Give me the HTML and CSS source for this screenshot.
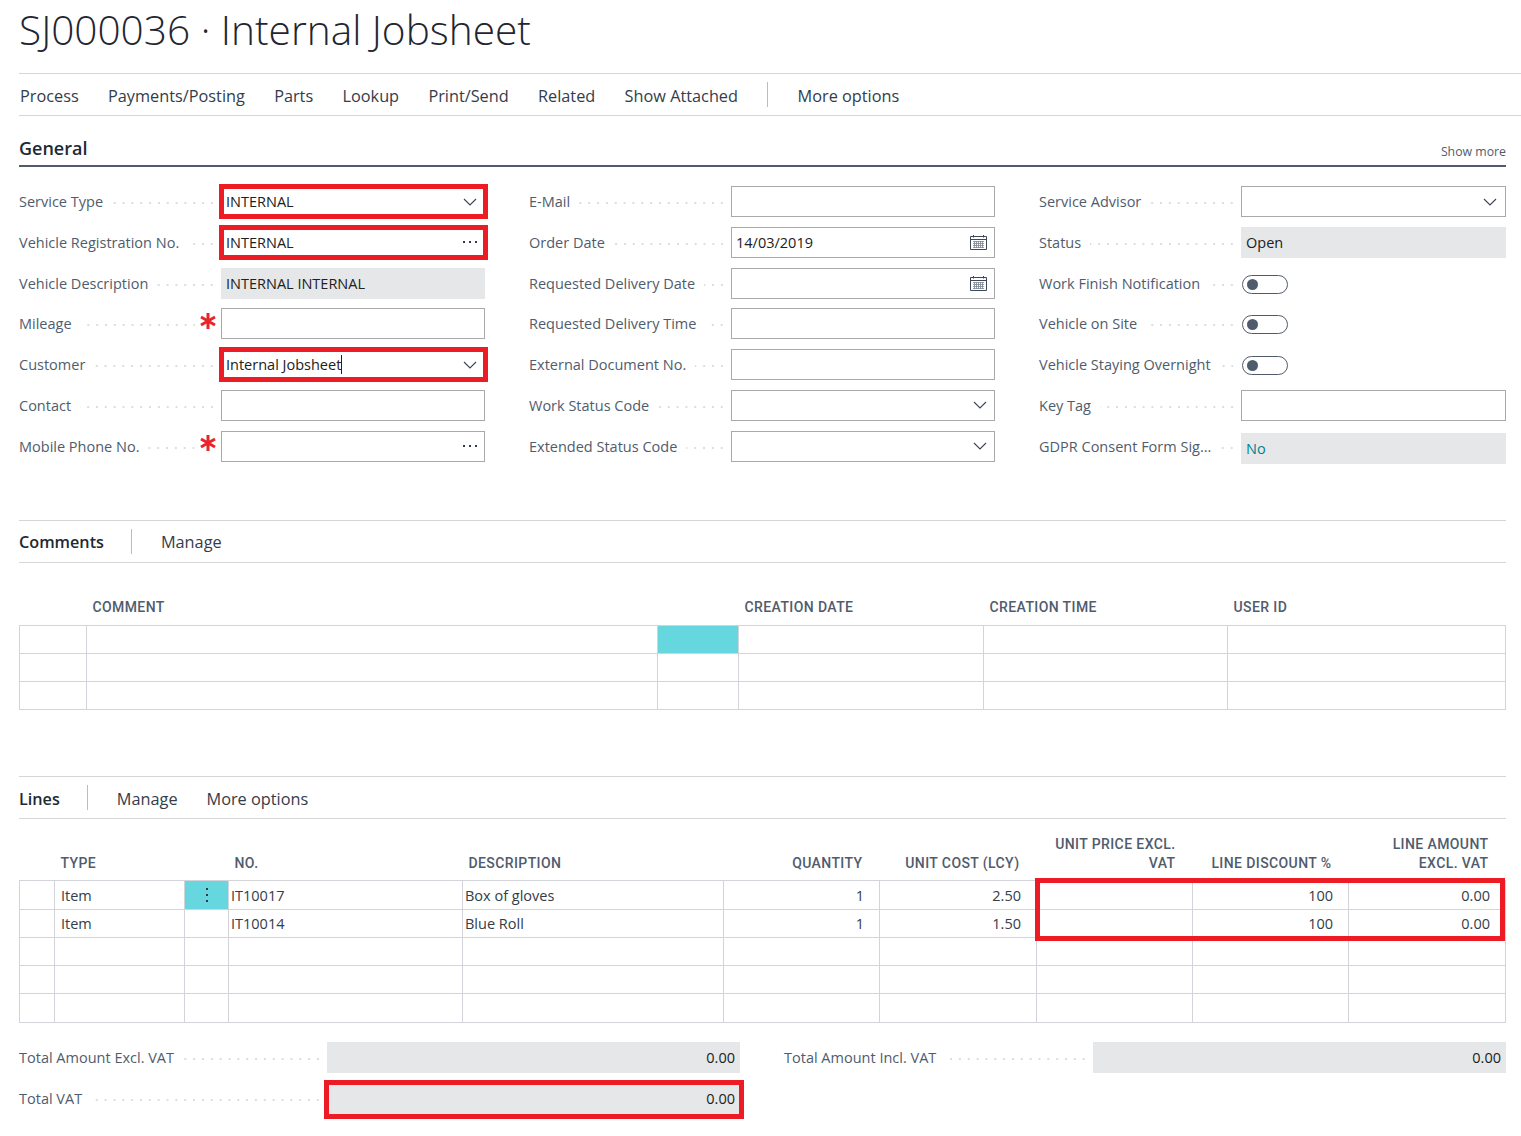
FILE: index.html
```html
<!DOCTYPE html>
<html lang="en">
  <head>
    <meta charset="UTF-8" />
    <title>SJ000036 · Internal Jobsheet</title>
    <link rel="stylesheet" href="styles.css">
  </head>
  <body>
    <svg class="icon-defs" width="0" height="0">
      <symbol id="chevron" viewBox="0 0 14 8"><path d="M1 1l6 6 6-6" fill="none" stroke="#3a4454" stroke-width="1.1"/></symbol>
      <symbol id="dots" viewBox="0 0 14 3"><path d="M0 0h2v2H0zM6 0h2v2H6zM12 0h2v2h-2z" fill="#333c4a"/></symbol>
      <symbol id="calendar" viewBox="0 0 17 16">
        <path d="M.5 2.500h16v13H.5z" fill="#fff" stroke="#3f4856"/>
        <path d="M1 5.500h15" stroke="#3f4856"/>
        <path d="M3.500 1v2.500M13.500 1v2.500" stroke="#3f4856"/>
        <path d="M3 7.500h11M3 9.500h11M3 11.500h11M3 13.500h11M4.500 7v7M6.500 7v7M8.500 7v7M10.500 7v7M12.500 7v7" stroke="#7c8592" stroke-width=".8"/>
      </symbol>
      <symbol id="star" viewBox="0 0 16 16"><path d="M8 0v16M1 4l14 8M15 4L1 12" stroke="#e8262a" stroke-width="3"/></symbol>
    </svg>

    <header class="page-title">
      <h1>SJ000036 · Internal Jobsheet</h1>
    </header>

    <nav class="action-bar">
      <span>Process</span>
      <span>Payments/Posting</span>
      <span>Parts</span>
      <span>Lookup</span>
      <span>Print/Send</span>
      <span>Related</span>
      <span>Show Attached</span>
      <i class="bar-divider"></i>
      <span>More options</span>
    </nav>

    <main class="content">
      <!-- General -->
      <div class="section-head">
        <h2>General</h2>
        <span class="show-more">Show more</span>
      </div>

      <div class="field-grid">
        <div class="field-col">
          <div class="field">
            <label>Service Type</label><i class="leader"></i>
            <div class="input flagged">INTERNAL<svg class="chevron"><use href="#chevron"/></svg></div>
          </div>
          <div class="field">
            <label>Vehicle Registration No.</label><i class="leader"></i>
            <div class="input flagged">INTERNAL<svg class="dots"><use href="#dots"/></svg></div>
          </div>
          <div class="field">
            <label>Vehicle Description</label><i class="leader"></i>
            <div class="input readonly">INTERNAL INTERNAL</div>
          </div>
          <div class="field">
            <label>Mileage</label><i class="leader"></i>
            <svg class="required"><use href="#star"/></svg>
            <div class="input"></div>
          </div>
          <div class="field">
            <label>Customer</label><i class="leader"></i>
            <div class="input flagged"><span class="caret">Internal Jobsheet</span><svg class="chevron"><use href="#chevron"/></svg></div>
          </div>
          <div class="field">
            <label>Contact</label><i class="leader"></i>
            <div class="input"></div>
          </div>
          <div class="field">
            <label>Mobile Phone No.</label><i class="leader"></i>
            <svg class="required"><use href="#star"/></svg>
            <div class="input"><svg class="dots"><use href="#dots"/></svg></div>
          </div>
        </div>

        <div class="field-col">
          <div class="field">
            <label>E-Mail</label><i class="leader"></i>
            <div class="input"></div>
          </div>
          <div class="field">
            <label>Order Date</label><i class="leader"></i>
            <div class="input">14/03/2019<svg class="calendar"><use href="#calendar"/></svg></div>
          </div>
          <div class="field">
            <label>Requested Delivery Date</label><i class="leader"></i>
            <div class="input"><svg class="calendar"><use href="#calendar"/></svg></div>
          </div>
          <div class="field">
            <label>Requested Delivery Time</label><i class="leader"></i>
            <div class="input"></div>
          </div>
          <div class="field">
            <label>External Document No.</label><i class="leader"></i>
            <div class="input"></div>
          </div>
          <div class="field">
            <label>Work Status Code</label><i class="leader"></i>
            <div class="input"><svg class="chevron"><use href="#chevron"/></svg></div>
          </div>
          <div class="field">
            <label>Extended Status Code</label><i class="leader"></i>
            <div class="input"><svg class="chevron"><use href="#chevron"/></svg></div>
          </div>
        </div>

        <div class="field-col">
          <div class="field">
            <label>Service Advisor</label><i class="leader"></i>
            <div class="input"><svg class="chevron"><use href="#chevron"/></svg></div>
          </div>
          <div class="field">
            <label>Status</label><i class="leader"></i>
            <div class="input readonly">Open</div>
          </div>
          <div class="field">
            <label>Work Finish Notification</label><i class="leader"></i>
            <div class="toggle-slot"><div class="toggle"></div></div>
          </div>
          <div class="field">
            <label>Vehicle on Site</label><i class="leader"></i>
            <div class="toggle-slot"><div class="toggle"></div></div>
          </div>
          <div class="field">
            <label>Vehicle Staying Overnight</label><i class="leader"></i>
            <div class="toggle-slot"><div class="toggle"></div></div>
          </div>
          <div class="field">
            <label>Key Tag</label><i class="leader"></i>
            <div class="input"></div>
          </div>
          <div class="field">
            <label>GDPR Consent Form Sig...</label><i class="leader"></i>
            <div class="input readonly link-value">No</div>
          </div>
        </div>
      </div>

      <!-- Comments -->
      <div class="part-bar comments-bar">
        <strong>Comments</strong>
        <i class="bar-divider"></i>
        <span>Manage</span>
      </div>

      <table class="grid comments-grid">
        <colgroup>
          <col class="c-67"><col class="c-571"><col class="c-81"><col class="c-245"><col class="c-244"><col class="c-278">
        </colgroup>
        <thead>
          <tr>
            <th></th><th>COMMENT</th><th></th><th>CREATION DATE</th><th>CREATION TIME</th><th>USER ID</th>
          </tr>
        </thead>
        <tbody>
          <tr><td></td><td></td><td class="active"></td><td></td><td></td><td></td></tr>
          <tr><td></td><td></td><td></td><td></td><td></td><td></td></tr>
          <tr><td></td><td></td><td></td><td></td><td></td><td></td></tr>
        </tbody>
      </table>

      <!-- Lines -->
      <div class="part-bar lines-bar">
        <strong>Lines</strong>
        <i class="bar-divider"></i>
        <span>Manage</span>
        <span>More options</span>
      </div>

      <div class="lines-wrap">
        <table class="grid lines-grid">
          <colgroup>
            <col class="c-35"><col class="c-130"><col class="c-44"><col class="c-234"><col class="c-261"><col class="c-156"><col class="c-157"><col class="c-156"><col class="c-156"><col class="c-157">
          </colgroup>
          <thead>
            <tr>
              <th></th><th>TYPE</th><th></th><th>NO.</th><th>DESCRIPTION</th>
              <th class="num">QUANTITY</th>
              <th class="num">UNIT COST (LCY)</th>
              <th class="num">UNIT PRICE EXCL. VAT</th>
              <th class="num">LINE DISCOUNT %</th>
              <th class="num">LINE AMOUNT EXCL. VAT</th>
            </tr>
          </thead>
          <tbody>
            <tr>
              <td></td><td class="type">Item</td>
              <td class="active row-menu"><svg width="2" height="14" viewBox="0 0 2 14"><path d="M0 0h2v2H0zM0 6h2v2H0zM0 12h2v2H0z" fill="#2f3a48"/></svg></td>
              <td>IT10017</td><td>Box of gloves</td><td class="num">1</td><td class="num">2.50</td><td></td><td class="num">100</td><td class="num">0.00</td>
            </tr>
            <tr>
              <td></td><td class="type">Item</td><td></td>
              <td>IT10014</td><td>Blue Roll</td><td class="num">1</td><td class="num">1.50</td><td></td><td class="num">100</td><td class="num">0.00</td>
            </tr>
            <tr><td></td><td></td><td></td><td></td><td></td><td></td><td></td><td></td><td></td><td></td></tr>
            <tr><td></td><td></td><td></td><td></td><td></td><td></td><td></td><td></td><td></td><td></td></tr>
            <tr><td></td><td></td><td></td><td></td><td></td><td></td><td></td><td></td><td></td><td></td></tr>
          </tbody>
        </table>
        <div class="lines-flag"></div>
      </div>

      <!-- Totals -->
      <div class="totals">
        <div class="total-row">
          <label>Total Amount Excl. VAT</label><i class="leader"></i>
          <div class="total-value">0.00</div>
        </div>
        <div class="total-row">
          <label>Total Amount Incl. VAT</label><i class="leader"></i>
          <div class="total-value">0.00</div>
        </div>
        <div class="total-row">
          <label>Total VAT</label><i class="leader"></i>
          <div class="total-value flagged">0.00</div>
        </div>
      </div>
    </main>
  </body>
</html>
```

FILE: styles.css
```css
* {
  box-sizing: border-box;
}

html,
body {
  margin: 0;
  background: #fff;
  font-family: 'Open Sans', 'Noto Sans', sans-serif;
  font-size: 14.5px;
  color: #212121;
}

.icon-defs {
  position: absolute;
}

/* Page header */
.page-title {
  height: 74px;
  margin-left: 19px;
  border-bottom: 1px solid #d5d6d9;
}

.page-title h1 {
  margin: 0;
  font-size: 40.6px;
  font-weight: 300;
  line-height: 60px;
  color: #1f2630;
}

.action-bar {
  display: flex;
  align-items: center;
  gap: 29.3px;
  height: 42px;
  margin-left: 19px;
  padding: 2px 0 0 1px;
  border-bottom: 1px solid #d5d6d9;
  font-size: 16.3px;
  color: #333c4a;
}

.bar-divider {
  width: 1px;
  height: 25px;
  margin-top: -2px;
  background: #b9bcc2;
}

.content {
  margin: 0 15px 0 19px;
}

/* General */
.section-head {
  display: flex;
  align-items: baseline;
  justify-content: space-between;
  height: 51px;
  padding-top: 19px;
  border-bottom: 2px solid #505c6d;
}

.section-head h2 {
  margin: 0;
  font-size: 18px;
  font-weight: 600;
  line-height: 26px;
  color: #212933;
}

.show-more {
  position: relative;
  top: 1px;
  font-size: 12.3px;
  color: #505c6d;
}

.field-grid {
  display: grid;
  grid-template-columns: 466px 466px 467px;
  column-gap: 44px;
  margin-top: 19px;
}

.field-col {
  display: grid;
  grid-auto-rows: 31px;
  row-gap: 9.8px;
}

.field {
  display: flex;
  align-items: center;
}

.field label,
.total-row label {
  color: #505c6d;
  white-space: nowrap;
}

/* dotted line between a label and its value */
.leader {
  flex: 1;
  align-self: center;
  height: 2px;
  margin: 3px 8px 0 9px;
  background-image: linear-gradient(90deg, transparent calc(100% - 2px), #dcdde0 calc(100% - 2px));
  background-size: 8.85px 2px;
  background-position: right center;
}

.required {
  width: 16px;
  height: 16px;
  margin: -6px 5px 0 -3px;
}

.input {
  position: relative;
  display: flex;
  align-items: center;
  flex: none;
  width: 264px;
  height: 100%;
  padding: 0 5px 0 4px;
  border: 1px solid #a9a9a9;
  background: #fff;
}

.field-col:last-child .input,
.field-col:last-child .toggle-slot {
  width: 265px;
}

.field-col:last-child .chevron {
  margin-right: 3px;
}

.input.readonly {
  border-color: #e6e7e9;
  background: #e6e7e9;
}

.link-value {
  margin-top: 4px;
  color: #00838f;
}

.input.flagged::after {
  content: "";
  position: absolute;
  top: -3px;
  right: -4px;
  bottom: -3px;
  left: -3px;
  border: 5px solid #ed1c24;
  pointer-events: none;
}

.caret {
  border-right: 1px solid #212121;
}

.chevron {
  width: 14px;
  height: 8px;
  margin-left: auto;
  margin-right: 2px;
}

.dots {
  width: 14px;
  height: 3px;
  margin-left: auto;
  margin-right: 2px;
}

.calendar {
  width: 17px;
  height: 16px;
  margin-left: auto;
  margin-right: 2px;
}

.toggle-slot {
  display: flex;
  align-items: center;
  flex: none;
  width: 264px;
  padding: 2px 0 0 1px;
}

.toggle {
  position: relative;
  width: 46px;
  height: 19px;
  border: 1px solid #505c6d;
  border-radius: 10px;
}

.toggle::before {
  content: "";
  position: absolute;
  top: 3px;
  left: 4px;
  width: 11px;
  height: 11px;
  border-radius: 50%;
  background: #505c6d;
}

/* Subpage bars */
.part-bar {
  display: flex;
  align-items: center;
  gap: 29px;
  height: 43px;
  padding-top: 2px;
  border-top: 1px solid #d5d6d9;
  border-bottom: 1px solid #d5d6d9;
  font-size: 16.3px;
  color: #333c4a;
}

.part-bar strong {
  font-size: 16.2px;
  font-weight: 600;
  color: #212933;
}

.part-bar .bar-divider {
  margin-left: -2px;
}

.comments-bar {
  margin-top: 58px;
}

.lines-bar {
  margin-top: 66px;
}

/* Tables */
.grid {
  width: 1487px;
  table-layout: fixed;
  border-collapse: collapse;
}

.c-35 { width: 35px; }
.c-44 { width: 44px; }
.c-67 { width: 67px; }
.c-81 { width: 81px; }
.c-130 { width: 130px; }
.c-156 { width: 156px; }
.c-157 { width: 157px; }
.c-234 { width: 234px; }
.c-244 { width: 244px; }
.c-245 { width: 245px; }
.c-261 { width: 261px; }
.c-278 { width: 278px; }
.c-571 { width: 571px; }

.grid th {
  padding: 0 6px 8px;
  border: 0;
  vertical-align: bottom;
  font-family: Roboto, 'Noto Sans', sans-serif;
  font-size: 14px;
  font-weight: 500;
  line-height: 19px;
  letter-spacing: 0.4px;
  text-align: left;
  color: #505c6d;
}

.comments-grid thead tr {
  height: 63px;
}

.lines-grid thead tr {
  height: 61px;
}

.lines-grid th {
  padding-bottom: 7px;
}

.grid th.num {
  padding-right: 17px;
  text-align: right;
}

.grid td {
  height: 28px;
  padding: 0 2px;
  border: 1px solid #d2d4d9;
  color: #333c4a;
  white-space: nowrap;
}

.lines-grid tbody tr:first-child td,
.lines-grid tbody tr:last-child td {
  height: 29px;
}

.lines-grid tbody tr:first-child td {
  padding-top: 1px;
}

.grid td.num {
  padding-right: 15px;
  text-align: right;
}

.grid td.type {
  padding-left: 6px;
}

.grid td.active {
  background: #66d7df;
}

.grid td.row-menu {
  text-align: center;
  line-height: 0;
}

.lines-wrap {
  position: relative;
}

.lines-flag {
  position: absolute;
  top: 59px;
  left: 1016px;
  width: 470px;
  height: 63px;
  border: 5px solid #ed1c24;
}

/* Totals */
.totals {
  display: grid;
  grid-template-columns: 721px 722px;
  column-gap: 44px;
  row-gap: 10px;
  margin-top: 19px;
  padding-bottom: 14px;
}

.total-row {
  display: flex;
  align-items: center;
  height: 31px;
}

.total-value {
  position: relative;
  flex: none;
  width: 413px;
  height: 100%;
  padding-right: 5px;
  background: #e6e7e9;
  line-height: 32px;
  text-align: right;
}

.total-value.flagged::after {
  content: "";
  position: absolute;
  top: -3px;
  right: -4px;
  bottom: -5px;
  left: -3px;
  border: 5px solid #ed1c24;
}
```
